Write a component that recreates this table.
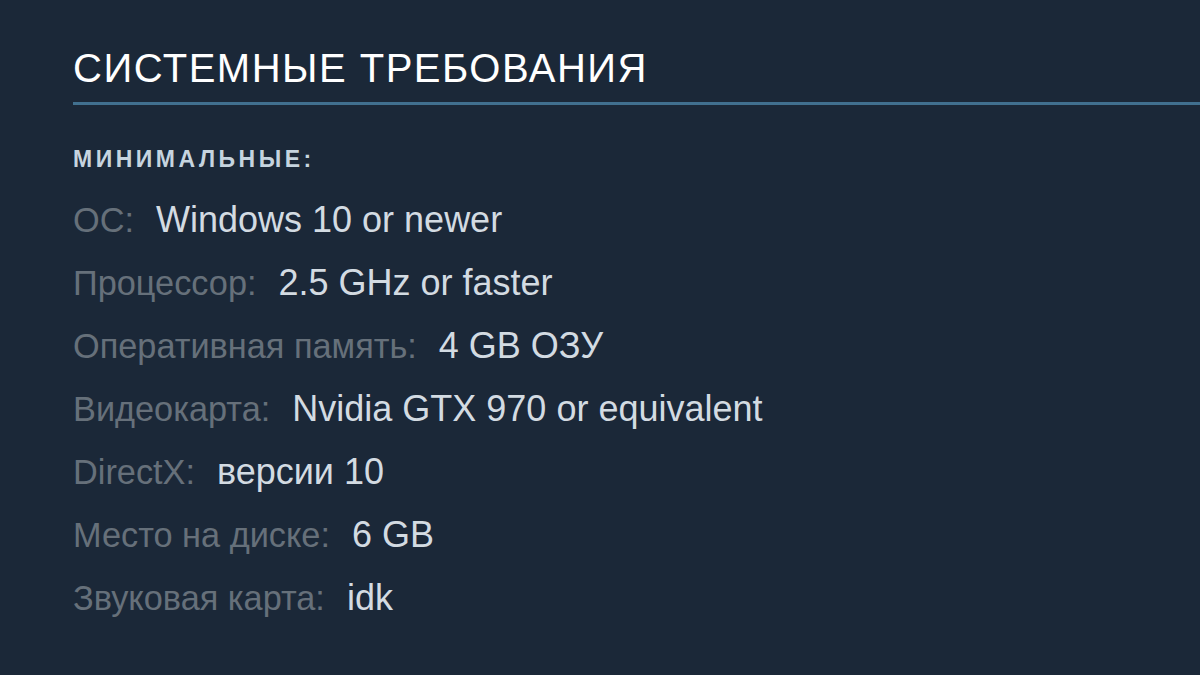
const rows: [string, string][] = [
  ["ОС:", "Windows 10 or newer"],
  ["Процессор:", "2.5 GHz or faster"],
  ["Оперативная память:", "4 GB ОЗУ"],
  ["Видеокарта:", "Nvidia GTX 970 or equivalent"],
  ["DirectX:", "версии 10"],
  ["Место на диске:", "6 GB"],
  ["Звуковая карта:", "idk"],
];

export default function App() {
  return (
    <div className="h-[675px] w-[1200px] overflow-hidden bg-[#1b2838] pl-[73px] pt-[46px] font-['Liberation_Sans',Arial,sans-serif]">
      <h2 className="text-[40px] leading-[44px] tracking-[1.5px] whitespace-nowrap text-white uppercase">
        Системные требования
      </h2>
      <div className="mt-[12px] h-[3px] bg-[#41708f]" />

      <div className="mt-[39px] text-[23px] leading-[30px] font-bold tracking-[3.5px] text-[#c6d4df] uppercase">
        Минимальные:
      </div>

      <ul className="mt-[14px]">
        {rows.map(([label, value]) => (
          <li key={label} className="text-[36px] leading-[63px] whitespace-nowrap">
            <span className="text-[34.3px] leading-none text-[#66707a]">{label}</span>
            <span className="ml-[22px] leading-none text-[#d3dbe2]">{value}</span>
          </li>
        ))}
      </ul>
    </div>
  );
}
